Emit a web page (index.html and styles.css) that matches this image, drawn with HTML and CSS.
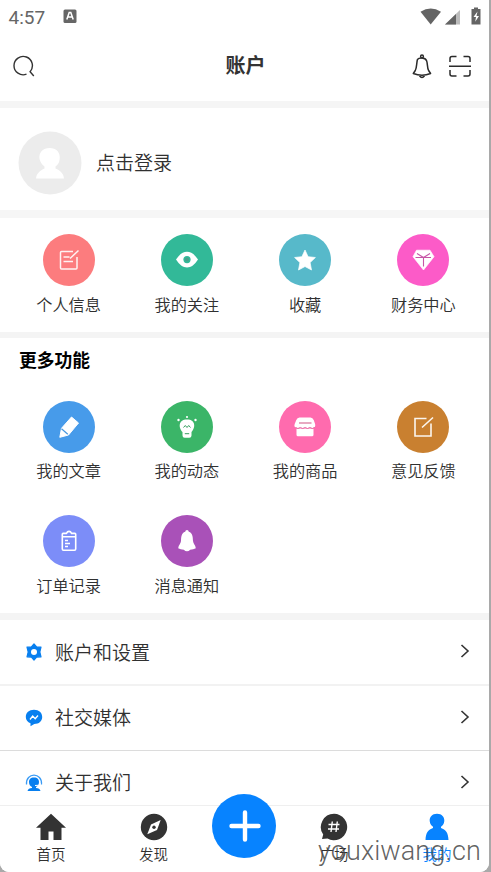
FILE: index.html
```html
<!DOCTYPE html>
<html lang="zh-CN">
<head>
<meta charset="utf-8">
<title>账户</title>
<link rel="stylesheet" href="styles.css">
</head>
<body>
<div class="phone">
  <div class="status">
    <span class="time">4:57</span>
    <svg class="app-badge" width="14" height="14" viewBox="0 0 14 14"><rect x="0.5" y="0.5" width="13" height="13.5" rx="1.5" fill="#666"/><path d="M3.8 10.5 6.2 3.5h1.6l2.4 7M4.9 8h4.2" fill="none" stroke="#fff" stroke-width="1.5"/></svg>
    <svg class="signals" width="62" height="20" viewBox="0 0 62 20" fill="#646464"><path d="M0.5 4.8Q10.7-1.8 21 4.8L10.7 17.5z"/><path d="M25 17.5 40 3v14.5z" fill="#bcbcbc"/><path d="M25 17.5 36 7v10.5z"/><path d="M54 .5h4V2h2.5v15.500h-9V2H54z"/><path d="M57.500 4.500 53.500 10H56l-.8 4.800L59 9h-2.500z" fill="#fff"/></svg>
  </div>
  <header class="topbar">
    <svg class="search" width="24" height="24" viewBox="0 0 24 24" fill="none" stroke="#333" stroke-width="1.400"><path d="M14.500 19.200a9.200 9.200 0 1 1 3.600-2.500L21.800 21"/></svg>
    <h1>账户</h1>
    <div class="actions">
      <svg width="22" height="26" viewBox="0 0 22 26" fill="none" stroke="#2b2b2b" stroke-width="1.500" stroke-linejoin="round"><circle cx="11" cy="3.500" r="1.400"/><path d="M6.400 6.500C8 4.600 14 4.200 15.600 7.700c1.100 2.400.4 7 2 9.800l2 3Q11 24 2.300 20.500l2-3c1.500-2.700 1.200-7 2.100-11M8.500 22.800Q11 26.200 13.500 22.800"/></svg>
      <svg width="24" height="24" viewBox="0 0 24 24" fill="none" stroke="#2b2b2b" stroke-width="1.500"><path d="M2 8V4.500Q2 2.500 4 2.500h4.500M15.500 2.500H20q2 0 2 2V8M2 16v4q0 2 2 2h4.500M15.500 22H20q2 0 2-2v-4M1 12.200h22"/></svg>
    </div>
  </header>

  <section class="profile">
    <svg width="64" height="64" viewBox="0 0 64 64"><circle cx="32" cy="32" r="31.500" fill="#ececec"/><path d="M31.500 17c7 0 11 4.500 10.200 11-.4 4-2.200 6-4.200 7.500v2c5 2 8 5 8.500 10H18c.5-5 4-8 8.500-10v-2c-2-1.500-3.800-3.500-5-7.500C20.500 21.500 25 17 31.500 17z" fill="#fff"/></svg>
    <span>点击登录</span>
  </section>

  <section class="shortcuts grid">
    <a class="tile"><span class="disc coral"><svg viewBox="0 0 52 52" fill="none" stroke="#fff" stroke-width="1.500"><path d="M30 17.500H18.500q-1 0-1 1V34q0 1 1 1H33q1 0 1-1V23M27 24.500 35.500 16.500M20.500 23h6M20.500 27.500h9.500" opacity=".9"/></svg></span>个人信息</a>
    <a class="tile"><span class="disc green"><svg viewBox="0 0 52 52"><path d="M15 25.500Q20 17.800 26 17.800t11 7.700Q32 33.500 26 33.500T15 25.500z" fill="#fff"/><circle cx="26" cy="25.600" r="3.600" fill="#32b998"/><circle cx="26" cy="25.600" r="2" fill="#4a9f8b"/></svg></span>我的关注</a>
    <a class="tile"><span class="disc teal"><svg viewBox="0 0 52 52"><path d="m26 16 3.100 6.700 7.300.8-5.300 5.100 1.400 7.400-6.500-3.500-6.500 3.500 1.400-7.400-5.300-5.100 7.300-.8z" fill="#fff" stroke="#fff" stroke-linejoin="round" stroke-width=".7"/></svg></span>收藏</a>
    <a class="tile"><span class="disc magenta"><svg viewBox="0 0 52 52"><path d="M19.500 16.200h13.500l4 6.500L26.500 36 16 22.700z" fill="#fff" stroke="#fff" stroke-linejoin="round" stroke-width=".7"/><path d="m20 19.500 6.500 4 6.500-4M18.500 23.500h15.500M26.500 23.500v9" fill="none" stroke="#c755a6" stroke-width="1.100"/></svg></span>财务中心</a>
  </section>

  <section class="more">
    <h2>更多功能</h2>
    <div class="grid">
      <a class="tile"><span class="disc blue"><svg viewBox="0 0 52 52"><path d="m28.500 16 7 6L25.500 34l-8.700 2.300 1.700-9z" fill="#fff" stroke="#fff" stroke-linejoin="round"/><path d="m18.500 27.700 6.300 5.500" stroke="#4797df" stroke-width="1.200"/></svg></span>我的文章</a>
      <a class="tile"><span class="disc leaf"><svg viewBox="0 0 52 52" fill="#fff"><path d="M26 18.500c9 0 8.500 8.500 4.500 12.500v3.500q0 2.300-2.200 2.300h-4.600q-2.200 0-2.200-2.300V31c-4-4-4.500-12.500 4.500-12.500z"/><circle cx="26" cy="16" r="1.100"/><circle cx="17.500" cy="19" r="1.200"/><circle cx="34.500" cy="19" r="1.200"/><path d="m22.500 26.500 1.800-2 1.700 2 1.700-2 1.800 2M23.800 32.700h4.400" fill="none" stroke="#379e60" stroke-width="1"/></svg></span>我的动态</a>
      <a class="tile"><span class="disc pink"><svg viewBox="0 0 52 52" fill="#fff"><path d="M20.500 16.500h11q2.200 0 3.200 2.500l1.400 4q.8 3.500-2.200 4H18q-3.500-.5-2.300-4l1.600-4q.9-2.500 3.200-2.500zM17.500 27.500h17v6.200q0 1.500-1.500 1.500H19q-1.500 0-1.500-1.500z"/><path d="M20 22h12.500" stroke="#d3638e" stroke-width="1.100"/><path d="M16.500 26.500q2.400 2 4.800 0 2.400 2 4.800 0 2.400 2 4.800 0 2.400 2 4.800 0" fill="none" stroke="#e567a0" stroke-width="1"/></svg></span>我的商品</a>
      <a class="tile"><span class="disc brown"><svg viewBox="0 0 52 52" fill="none" stroke="#fff" stroke-width="1.600"><path d="M29.500 17.500H18V35h16V22.500M25 26.500l11-10" opacity=".92"/></svg></span>意见反馈</a>
      <a class="tile"><span class="disc violet"><svg viewBox="0 0 52 52" fill="none" stroke="#fff" stroke-width="1.600"><path d="M19.300 21.700h13.400V34q0 1.200-1.200 1.200h-11q-1.200 0-1.200-1.200zM19.300 21.700v-2.500q0-.8.800-.8h3.300q1-2 2.600-2t2.600 2h3.300q.8 0 .8.800v2.500M22 25.500h3M22 28.500h5M22 31.500h3"/></svg></span>订单记录</a>
      <a class="tile"><span class="disc purple"><svg viewBox="0 0 52 52" fill="#fff"><path d="M26 15q1.600 0 1.800 1.700c4 1.300 4 5.300 4.200 9.300.2 2.700 2.500 4 2.800 7.200q-2.300 1.300-5.600 1.500-1.400 1.600-3.200 1.600t-3.200-1.600q-3.300-.2-5.600-1.500c.3-3.200 2.600-4.500 2.800-7.200.2-4 .2-8 4.200-9.300Q24.400 15 26 15z"/></svg></span>消息通知</a>
    </div>
  </section>

  <main class="list">
    <a class="row"><svg class="mark" viewBox="0 0 18 18"><path d="M9 1 11.600 3.900 16 4.200 14.800 9 16 13.800 11.600 14.100 9 17 6.400 14.100 2 13.800 3.200 9 2 4.200 6.400 3.900z" fill="#087fef" stroke="#087fef" stroke-width="1.200" stroke-linejoin="round"/><circle cx="9" cy="9" r="3" fill="#fff"/></svg><span>账户和设置</span><svg class="chev" viewBox="0 0 10 16"><path d="m1.500 2 6.500 6-6.500 6"/></svg></a>
    <a class="row"><svg class="mark" viewBox="0 0 18 18"><path d="M9 .8c5 0 8.200 3 8.200 7.200S14 15 9.300 15L5.500 17.200V14.300C2.500 13.200.8 11 .8 8 .8 3.800 4 .8 9 .8z" fill="#087fef"/><path d="m5 10.500 2.700-3.500 2.500 2.700L13 6.500" fill="none" stroke="#fff" stroke-width="1.300"/></svg><span>社交媒体</span><svg class="chev" viewBox="0 0 10 16"><path d="m1.500 2 6.500 6-6.500 6"/></svg></a>
    <a class="row"><svg class="mark" viewBox="0 0 18 18"><path d="M1.500 10.500C.5-2 17.500-2 16.500 10.500" fill="none" stroke="#3a9bf5" stroke-width="1.300"/><path d="M9 3.500c3.500 0 5 2 5 4.500 0 2.700-1.300 4-3 5v1c2.500.2 4 .8 4.500 3h-13c.5-2.200 2-2.800 4.500-3v-1c-1.700-1-3-2.300-3-5 0-2.500 1.500-4.500 5-4.500z" fill="#087fef"/><path d="M10 11.500q4.500.5 6-2" fill="none" stroke="#fff" stroke-width="1"/></svg><span>关于我们</span><svg class="chev" viewBox="0 0 10 16"><path d="m1.500 2 6.500 6-6.500 6"/></svg></a>
  </main>

  <nav class="tabs">
    <a class="tab"><svg width="30" height="28" viewBox="0 0 30 28"><path d="M15 .8 30 14.700h-4.500V27h-8v-8.500h-5V27h-8V14.700H0z" fill="#333"/></svg>首页</a>
    <a class="tab"><svg width="28" height="28" viewBox="0 0 28 28"><circle cx="14" cy="14" r="13.200" fill="#333"/><path d="m20.700 7-3.700 10-9.700 4.300L11 11.500z" fill="#fff"/><circle cx="14" cy="14.200" r="1.700" fill="#333"/></svg>发现</a>
    <a class="add"><svg width="64" height="64" viewBox="0 0 64 64"><circle cx="32" cy="32" r="32" fill="#0783ff"/><path d="M33 18.500v27M19.500 32h27" stroke="#fff" stroke-width="4.400" stroke-linecap="round"/></svg></a>
    <a class="tab"><svg width="28" height="28" viewBox="0 0 28 28"><path d="M14 .8a13.200 13.200 0 1 1-6.500 24.700L2 26l1.200-4.500A13.200 13.200 0 0 1 14 .8z" fill="#333"/><path d="M12.300 8.500 11 19M17.300 8.500 16 19M8.500 11.500h11M8 16h11" stroke="#fff" stroke-width="1.400"/></svg>广场</a>
    <a class="tab active"><svg width="26" height="28" viewBox="0 0 26 28"><path d="M13 .8c5 0 7.600 3.300 7.300 7.200-.2 3-1.600 4.500-3.300 5.800v1.200c4.500 1.500 7.300 4.500 7.500 12h-23C1.700 19.500 4.500 16.500 9 15v-1.200C7.300 12.500 5.900 11 5.700 8 5.400 4.100 8 .8 13 .8z" fill="#0783ff"/></svg>我的</a>
  </nav>
  <div class="watermark">youxiwang.cn</div>
</div>
</body>
</html>
```
FILE: styles.css
```css
* { box-sizing: border-box; }
body {
  margin: 0;
  background: #a9a9a9;
  font-family: "Noto Sans CJK SC", sans-serif;
  font-weight: 350;
  color: #303030;
}
svg { display: block; flex: none; }
.phone {
  position: relative;
  width: 489px;
  height: 872px;
  overflow: hidden;
  display: flex;
  flex-direction: column;
  background: #fff;
  border-radius: 0 0 9px 9px;
}
.phone > * { flex: none; }
.status {
  height: 34px;
  padding: 0 7px 0 8.500px;
  display: flex;
  align-items: center;
}
.time { font: 19px/37px Roboto, sans-serif; color: #666; width: 54.500px; }
.app-badge { margin-top: -2px; }
.signals { margin-left: auto; margin-top: -1px; }
.topbar {
  height: 74px;
  padding: 0 17px 3px 12px;
  border-bottom: 7px solid #f5f5f5;
  display: grid;
  grid-template-columns: 1fr auto 1fr;
  align-items: center;
}
.topbar h1 { margin: -3px 0 0 7px; font-size: 20px; line-height: 30px; font-weight: 700; color: #333; }
.search { margin-top: 2px; }
.actions { display: flex; justify-content: flex-end; align-items: center; gap: 15px; }
.profile {
  height: 110px;
  padding-left: 18px;
  border-bottom: 8px solid #f6f6f6;
  display: flex;
  align-items: center;
  gap: 14px;
  font-size: 19px;
  padding-top: 7px;
}
.profile span { margin-top: -3px; }
.grid {
  display: grid;
  grid-template-columns: repeat(4, 1fr);
  padding: 0 6.500px 0 9.500px;
}
.shortcuts { height: 120px; padding-top: 16.400px; border-bottom: 6px solid #f4f4f4; }
.tile {
  display: flex;
  flex-direction: column;
  align-items: center;
  gap: 5.500px;
  font-size: 16.2px;
  line-height: 24px;
}
.disc { width: 52px; height: 52px; border-radius: 50%; }
.coral { background: #fc7c7e; }
.green { background: #32b998; }
.teal { background: #57b9ca; }
.magenta { background: #fc5bc8; }
.blue { background: #479bea; }
.leaf { background: #3bb568; }
.pink { background: #ff6bae; }
.brown { background: #c98030; }
.violet { background: #7c8df8; }
.purple { background: #a951b8; }
.more { height: 282px; border-bottom: 7px solid #f4f4f4; }
.more h2 {
  margin: 0;
  padding: 9px 0 0 19px;
  height: 62.500px;
  font-size: 17.800px;
  line-height: 25px;
  font-weight: 700;
  color: #000;
}
.more .grid { row-gap: 33px; }
.list { height: 185px; overflow: hidden; }
.row {
  height: 66px;
  padding: 0 19px 0 25px;
  border-bottom: 2px solid #f2f2f2;
  display: flex;
  align-items: center;
  font-size: 19px;
}
.row:nth-child(2) { height: 65px; border-bottom: 1px solid #dcdcdc; }
.row span { flex: 1; margin: -2px 0 0 12px; }
.row:nth-child(n+2) span { margin-top: -3px; }
.mark { width: 18px; height: 18px; }
.chev { width: 10px; height: 16px; margin-top: -2px; fill: none; stroke: #333; stroke-width: 1.600; }
.tabs {
  height: 67px;
  border-top: 1px solid #efefef;
  display: grid;
  grid-template-columns: 102px 103px 78px 102px 104px;
  background: #fff;
}
.tab {
  display: flex;
  flex-direction: column;
  align-items: center;
  padding-top: 7px;
  font-size: 14.500px;
  line-height: 20px;
}
.tab svg { margin-bottom: 3px; }
.active { color: #0783ff; }
.add { justify-self: center; margin-top: -12px; }
.watermark {
  position: absolute;
  left: 318px;
  top: 835px;
  font: 300 27px/32px Roboto, sans-serif;
  letter-spacing: .1px;
  color: rgba(70, 70, 70, .85);
}
```
